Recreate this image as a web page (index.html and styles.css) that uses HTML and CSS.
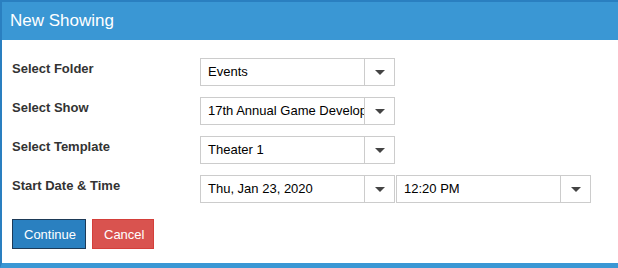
FILE: index.html
```html
<!DOCTYPE html>
<html lang="en">
<head>
<meta charset="UTF-8" />
<title>New Showing</title>
<link rel="stylesheet" href="styles.css">
</head>
<body>
<div class="dialog">
  <div class="dialog-header">New Showing</div>
  <div class="dialog-body">
    <div class="form-row">
      <label>Select Folder</label>
      <div class="select"><span class="value">Events</span><span class="arrow"></span></div>
    </div>
    <div class="form-row">
      <label>Select Show</label>
      <div class="select"><span class="value">17th Annual Game Developers Conference</span><span class="arrow"></span></div>
    </div>
    <div class="form-row">
      <label>Select Template</label>
      <div class="select"><span class="value">Theater 1</span><span class="arrow"></span></div>
    </div>
    <div class="form-row">
      <label>Start Date &amp; Time</label>
      <div class="select"><span class="value">Thu, Jan 23, 2020</span><span class="arrow"></span></div>
      <div class="select time"><span class="value">12:20 PM</span><span class="arrow"></span></div>
    </div>
    <div class="buttons">
      <button class="btn btn-primary">Continue</button>
      <button class="btn btn-danger">Cancel</button>
    </div>
  </div>
</div>
</body>
</html>
```

FILE: styles.css
```css
body {
  margin: 0;
  font-family: 'Liberation Sans', Arial, sans-serif;
  background: #fff;
}
.dialog {
  border-left: 2px solid #2a7fc0;
  border-top: 2px solid #2a7fc0;
  border-bottom: 5px solid #3a97d4;
  height: 268px;
  box-sizing: border-box;
}
.dialog-header {
  background-color: #3a97d4;
  color: #fff;
  font-size: 17px;
  height: 38px;
  line-height: 38px;
  padding-left: 8px;
}
.dialog-body {
  padding: 18px 0 0 10px;
}
.form-row {
  display: flex;
  height: 28px;
  margin-bottom: 11px;
}
.form-row label {
  width: 188px;
  font-size: 13px;
  font-weight: bold;
  color: #333;
  padding-top: 3px;
}
.select {
  width: 195px;
  height: 28px;
  box-sizing: border-box;
  border: 1px solid #ccc;
  display: flex;
  font-size: 13px;
  color: #000;
}
.select.time {
  margin-left: 1px;
}
.select .value {
  flex: 1;
  padding-left: 7px;
  line-height: 26px;
  white-space: nowrap;
  overflow: hidden;
}
.select .arrow {
  width: 29px;
  border-left: 1px solid #ccc;
  position: relative;
}
.select .arrow::after {
  content: "";
  position: absolute;
  left: 10px;
  top: 11px;
  border-left: 5px solid transparent;
  border-right: 5px solid transparent;
  border-top: 5px solid #444;
}
.buttons {
  display: flex;
  gap: 6px;
  margin-top: 5px;
  padding-top: 5px;
}
.btn {
  font-family: 'Liberation Sans', Arial, sans-serif;
  font-size: 13px;
  color: #fff;
  height: 30px;
  padding: 0 11px;
  cursor: pointer;
}
.btn-primary {
  background-color: #2a80c0;
  border: 1px solid #1d3a57;
  width: 74px;
}
.btn-danger {
  background-color: #d9534f;
  border: 1px solid #d43f3a;
  width: 62px;
}
```
